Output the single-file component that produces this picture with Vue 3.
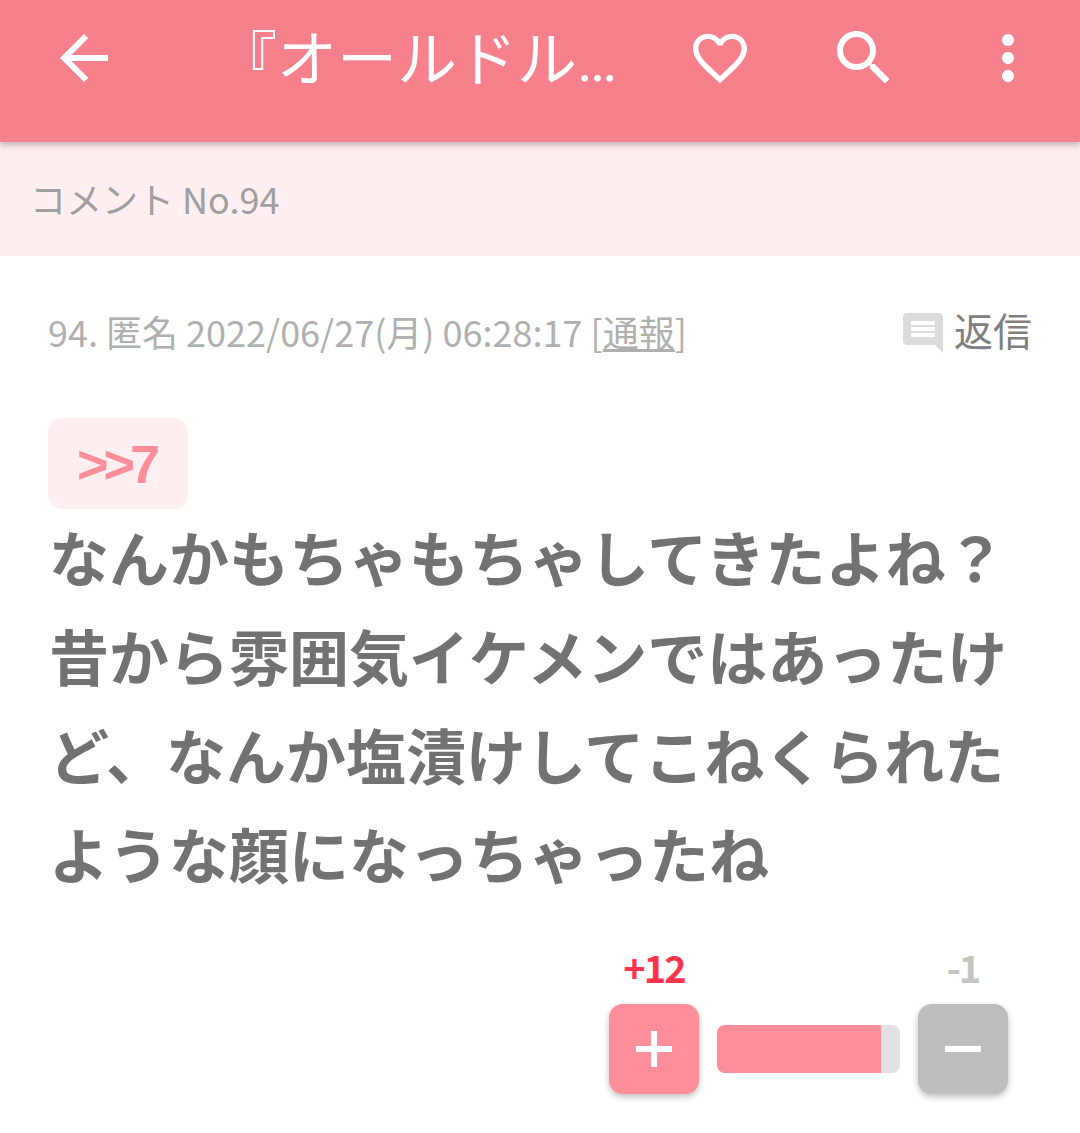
<template>
  <div class="page">
    <header class="app-bar">
      <button class="icon-btn" aria-label="戻る">
        <svg width="72" height="72" viewBox="0 0 24 24">
          <path d="M20 11H7.83l5.59-5.59L12 4l-8 8 8 8 1.41-1.41L7.83 13H20v-2z" fill="#fff" />
        </svg>
      </button>
      <h1 class="title">『オールドル…</h1>
      <div class="actions">
        <button class="icon-btn" aria-label="お気に入り">
          <svg width="72" height="72" viewBox="-1.33 -1.33 26.67 26.67">
            <path d="M16.5 3c-1.74 0-3.41.81-4.5 2.09C10.91 3.81 9.24 3 7.5 3 4.42 3 2 5.42 2 8.5c0 3.78 3.4 6.86 8.55 11.54L12 21.35l1.45-1.32C18.6 15.36 22 12.28 22 8.5 22 5.42 19.58 3 16.5 3zm-4.4 15.55l-.1.1-.1-.1C7.14 14.24 4 11.39 4 8.5 4 6.5 5.5 5 7.5 5c1.54 0 3.04.99 3.57 2.36h1.87C13.46 5.99 14.96 5 16.5 5c2 0 3.5 1.5 3.5 3.5 0 2.89-3.14 5.74-7.9 10.05z" fill="#fff" />
          </svg>
        </button>
        <button class="icon-btn" aria-label="検索">
          <svg width="72" height="72" viewBox="0 0 24 24">
            <path d="M15.5 14h-.79l-.28-.27C15.41 12.59 16 11.11 16 9.5 16 5.91 13.09 3 9.5 3S3 5.91 3 9.5 5.91 16 9.5 16c1.61 0 3.09-.59 4.23-1.57l.27.28v.79l5 4.99L20.49 19l-4.99-5zm-6 0C7.01 14 5 11.99 5 9.5S7.01 5 9.5 5 14 7.01 14 9.5 11.99 14 9.5 14z" fill="#fff" />
          </svg>
        </button>
        <button class="icon-btn" aria-label="メニュー">
          <svg width="72" height="72" viewBox="0 0 24 24">
            <path d="M12 8c1.1 0 2-.9 2-2s-.9-2-2-2-2 .9-2 2 .9 2 2 2zm0 2c-1.1 0-2 .9-2 2s.9 2 2 2 2-.9 2-2-.9-2-2-2zm0 6c-1.1 0-2 .9-2 2s.9 2 2 2 2-.9 2-2-.9-2-2-2z" fill="#fff" />
          </svg>
        </button>
      </div>
    </header>

    <div class="sub-bar">コメント No.94</div>

    <main class="comment">
      <div class="meta">
        <span class="info">94. 匿名 2022/06/27(月) 06:28:17 [<a class="report">通報</a>]</span>
        <span class="reply">
          <svg width="48" height="48" viewBox="0 0 24 24">
            <path d="M21.99 4c0-1.1-.89-2-1.99-2H4c-1.1 0-2 .9-2 2v12c0 1.1.9 2 2 2h14l4 4-.01-18zM18 14H6v-2h12v2zm0-3H6V9h12v2zm0-3H6V6h12v2z" fill="#dcdcdc" />
          </svg>
          <span class="reply-label">返信</span>
        </span>
      </div>

      <div class="anchor">&gt;&gt;7</div>
      <p class="body">なんかもちゃもちゃしてきたよね？<br />昔から雰囲気イケメンではあったけど、なんか塩漬けしてこねくられたような顔になっちゃったね</p>

      <div class="votes">
        <div class="vote">
          <span class="count up">+{{ plus }}</span>
          <button class="vote-btn plus" aria-label="プラス">
            <svg width="36" height="36" viewBox="0 0 36 36"><path d="M18 0V36M0 18H36" stroke="#fff" stroke-width="6" /></svg>
          </button>
        </div>
        <div class="meter"><div class="meter-fill" :style="{ width: ratio + '%' }"></div></div>
        <div class="vote">
          <span class="count down">-{{ minus }}</span>
          <button class="vote-btn minus" aria-label="マイナス">
            <svg width="36" height="36" viewBox="0 0 36 36"><path d="M0 18H36" stroke="#fff" stroke-width="6" /></svg>
          </button>
        </div>
      </div>
    </main>
  </div>
</template>

<script setup>
const plus = 12
const minus = 1
const ratio = 89.6
</script>

<style>
html, body {
  background: #fff;
}
</style>

<style scoped>
.page {
  width: 1080px;
  height: 1133px;
  overflow: hidden;
  font-family: "Noto Sans CJK JP", "Noto Sans", sans-serif;
}

button {
  border: none;
  background: none;
  padding: 0;
  display: flex;
  align-items: center;
  justify-content: center;
}

.icon-btn {
  flex: none;
  width: 72px;
  height: 72px;
}

.app-bar {
  height: 142px;
  background: #f6808c;
  display: flex;
  align-items: center;
  padding: 0 36px 26px 48px;
  box-sizing: border-box;
  box-shadow: 0 3px 6px rgba(0, 0, 0, 0.25);
  position: relative;
}

.title {
  flex: none;
  margin: 6px 0 0 97px;
  font-family: Roboto, "Noto Sans CJK JP", sans-serif;
  font-size: 60px;
  font-weight: 400;
  color: #fff;
  line-height: 1;
  white-space: nowrap;
}

.actions {
  margin-left: auto;
  display: flex;
  gap: 72px;
}

.sub-bar {
  height: 114px;
  background: #ffeff1;
  color: #a0a0a0;
  font-size: 36px;
  line-height: 112px;
  padding-left: 30px;
}

.comment {
  padding: 0 48px;
}

.meta {
  display: flex;
  justify-content: space-between;
  align-items: center;
  height: 149px;
}

.info {
  font-size: 36px;
  color: #b0b0b0;
}

.report {
  text-decoration: underline;
}

.reply {
  display: flex;
  align-items: center;
  gap: 7px;
  font-size: 39px;
  color: #808080;
}

.reply svg {
  margin-top: 5px;
}

.reply-label {
  padding-bottom: 3px;
}

.anchor {
  margin-top: 13px;
  width: 140px;
  height: 91px;
  border-radius: 14px;
  background: #ffeff1;
  color: #ff8d9a;
  font-family: "Liberation Sans", sans-serif;
  font-weight: 700;
  font-size: 54px;
  letter-spacing: -5px;
  line-height: 93px;
  text-align: center;
  text-indent: -4px;
}

.body {
  margin: -3px 0 0;
  font-size: 60px;
  font-weight: 700;
  line-height: 99px;
  color: #727272;
  padding-left: 1px;
}

.votes {
  margin-top: 38px;
  padding-left: 561px;
  display: flex;
  align-items: flex-end;
}

.vote {
  width: 90px;
  display: flex;
  flex-direction: column;
  align-items: center;
}

.count {
  font-size: 38px;
  letter-spacing: -2px;
  font-weight: 700;
  line-height: 54px;
  margin-bottom: 10px;
}

.up {
  color: #ff334b;
}

.down {
  color: #c4c4c4;
}

.vote-btn {
  width: 90px;
  height: 90px;
  border-radius: 14px;
  box-shadow: 0 3px 6px rgba(0, 0, 0, 0.25);
}

.plus {
  background: #ff8d9a;
}

.minus {
  background: #bebebe;
}

.meter {
  width: 183px;
  height: 48px;
  margin: 0 18px 21px;
  border-radius: 8px;
  background: #e2e2e2;
  overflow: hidden;
}

.meter-fill {
  height: 100%;
  background: #ff8d9a;
}
</style>
